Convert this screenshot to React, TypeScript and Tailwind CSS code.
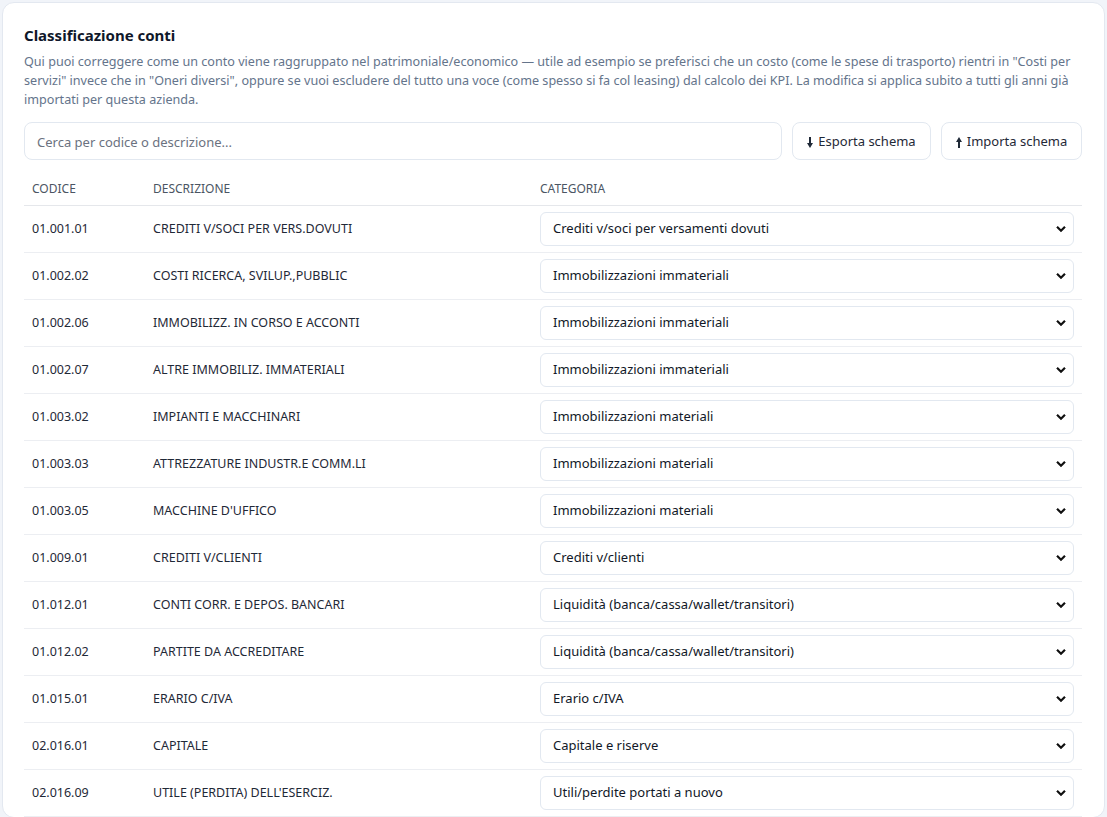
import React from "react";

type Row = { code: string; desc: string; cat: string };

const CATEGORIES = [
  "Crediti v/soci per versamenti dovuti",
  "Immobilizzazioni immateriali",
  "Immobilizzazioni materiali",
  "Crediti v/clienti",
  "Liquidità (banca/cassa/wallet/transitori)",
  "Erario c/IVA",
  "Capitale e riserve",
  "Utili/perdite portati a nuovo",
  "Debiti v/fornitori",
  "Costi per servizi",
  "Oneri diversi",
  "Escluso dai KPI",
];

const ROWS: Row[] = [
  { code: "01.001.01", desc: "CREDITI V/SOCI PER VERS.DOVUTI", cat: "Crediti v/soci per versamenti dovuti" },
  { code: "01.002.02", desc: "COSTI RICERCA, SVILUP.,PUBBLIC", cat: "Immobilizzazioni immateriali" },
  { code: "01.002.06", desc: "IMMOBILIZZ. IN CORSO E ACCONTI", cat: "Immobilizzazioni immateriali" },
  { code: "01.002.07", desc: "ALTRE IMMOBILIZ. IMMATERIALI", cat: "Immobilizzazioni immateriali" },
  { code: "01.003.02", desc: "IMPIANTI E MACCHINARI", cat: "Immobilizzazioni materiali" },
  { code: "01.003.03", desc: "ATTREZZATURE INDUSTR.E COMM.LI", cat: "Immobilizzazioni materiali" },
  { code: "01.003.05", desc: "MACCHINE D'UFFICO", cat: "Immobilizzazioni materiali" },
  { code: "01.009.01", desc: "CREDITI V/CLIENTI", cat: "Crediti v/clienti" },
  { code: "01.012.01", desc: "CONTI CORR. E DEPOS. BANCARI", cat: "Liquidità (banca/cassa/wallet/transitori)" },
  { code: "01.012.02", desc: "PARTITE DA ACCREDITARE", cat: "Liquidità (banca/cassa/wallet/transitori)" },
  { code: "01.015.01", desc: "ERARIO C/IVA", cat: "Erario c/IVA" },
  { code: "02.016.01", desc: "CAPITALE", cat: "Capitale e riserve" },
  { code: "02.016.09", desc: "UTILE (PERDITA) DELL'ESERCIZ.", cat: "Utili/perdite portati a nuovo" },
];

function ArrowIcon({ up }: { up?: boolean }) {
  return (
    <svg width="6" height="11" viewBox="0 0 6 11" className={up ? "rotate-180" : ""} aria-hidden>
      <rect x="2" y="0" width="2" height="7" fill="#1f2937" />
      <path d="M0 6 L6 6 L3 11 Z" fill="#1f2937" />
    </svg>
  );
}

function Chevron() {
  return (
    <svg width="10" height="7" viewBox="0 0 10 7" aria-hidden>
      <path d="M1 1.2 L5 5.2 L9 1.2" fill="none" stroke="#111" strokeWidth="2.2" />
    </svg>
  );
}

function CategorySelect({ value }: { value: string }) {
  return (
    <div className="relative">
      <select
        defaultValue={value}
        className="h-[34px] w-full appearance-none rounded-md border border-[#e2e8f0] bg-white pl-3 pr-8 text-[13px] text-[#111827] outline-none"
      >
        {CATEGORIES.map((c) => (
          <option key={c} value={c}>
            {c}
          </option>
        ))}
      </select>
      <span className="pointer-events-none absolute right-[8px] top-1/2 flex -translate-y-1/2">
        <Chevron />
      </span>
    </div>
  );
}

export default function App() {
  return (
    <div
      className="h-screen overflow-hidden bg-[#f1f4f9] p-[2px]"
      style={{ fontFamily: '"Noto Sans", "Open Sans", sans-serif' }}
    >
      <div className="rounded-xl border border-[#e3e8f0] bg-white pl-[21px] pr-[22px] pt-[21px]">
        <h2 className="text-[15px] font-bold leading-[22px] text-[#0f172a]">Classificazione conti</h2>
        <p className="mt-[6px] text-[12.6px] leading-[19px] text-[#64748b]">
          Qui puoi correggere come un conto viene raggruppato nel patrimoniale/economico — utile ad esempio se preferisci
          che un costo (come le spese di trasporto) rientri in "Costi per servizi" invece che in "Oneri diversi", oppure se
          vuoi escludere del tutto una voce (come spesso si fa col leasing) dal calcolo dei KPI. La modifica si applica subito
          a tutti gli anni già importati per questa azienda.
        </p>

        <div className="mt-[13px] flex gap-[10px]">
          <input
            type="text"
            placeholder="Cerca per codice o descrizione..."
            className="h-[38px] flex-1 rounded-lg border border-[#e2e8f0] px-3 pt-[2px] text-[13px] text-[#111827] outline-none placeholder:text-[#6b7280]"
          />
          <button className="flex h-[38px] w-[139px] items-center justify-center gap-[5px] rounded-lg border border-[#e2e8f0] bg-white pt-[2px] text-[13px] text-[#1f2937]">
            <ArrowIcon />
            Esporta schema
          </button>
          <button className="flex h-[38px] w-[141px] items-center justify-center gap-[5px] rounded-lg border border-[#e2e8f0] bg-white pt-[2px] text-[13px] text-[#1f2937]">
            <ArrowIcon up />
            Importa schema
          </button>
        </div>

        <table className="mt-[13px] w-full border-collapse text-left">
          <colgroup>
            <col className="w-[121px]" />
            <col className="w-[387px]" />
            <col />
          </colgroup>
          <thead>
            <tr className="border-b border-[#e5e7eb]">
              <th className="px-2 py-2 text-[12px] font-normal uppercase leading-4 text-[#4b5563]">Codice</th>
              <th className="px-2 py-2 text-[12px] font-normal uppercase leading-4 text-[#4b5563]">Descrizione</th>
              <th className="px-2 py-2 text-[12px] font-normal uppercase leading-4 text-[#4b5563]">Categoria</th>
            </tr>
          </thead>
          <tbody>
            {ROWS.map((r) => (
              <tr key={r.code} className="border-b border-[#eceef2]">
                <td className="px-2 py-[6px] text-[12.5px] text-[#1f2937]">{r.code}</td>
                <td className="px-2 py-[6px] text-[12.5px] text-[#1f2937]">{r.desc}</td>
                <td className="px-2 py-[6px]">
                  <CategorySelect value={r.cat} />
                </td>
              </tr>
            ))}
          </tbody>
        </table>
      </div>
    </div>
  );
}
